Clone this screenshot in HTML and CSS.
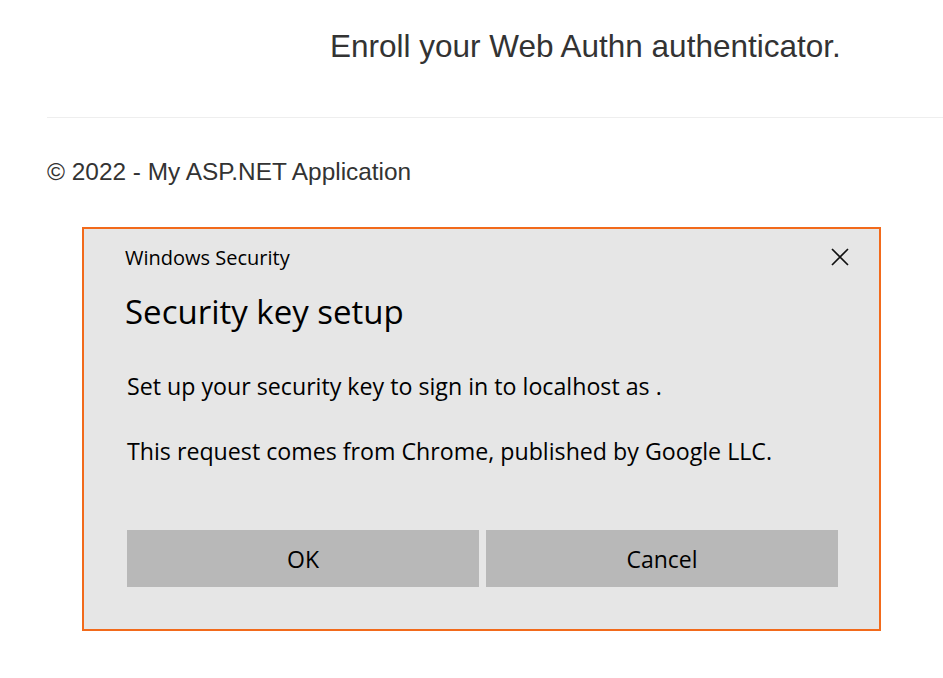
FILE: index.html
```html
<!DOCTYPE html>
<html>
<head>
<meta charset="utf-8">
<link rel="stylesheet" href="styles.css">
</head>
<body>
<div class="page">
  <h2 class="title">Enroll your Web Authn authenticator.</h2>
  <hr class="rule">
  <footer class="footer">© 2022 - My ASP.NET Application</footer>
  <div class="dialog">
    <div class="dlg-top">
      <span class="dlg-app">Windows Security</span>
      <svg class="dlg-close" width="18" height="18" viewBox="0 0 18 18"><path d="M1 1L17 17M17 1L1 17" stroke="#111" stroke-width="1.7" fill="none"/></svg>
    </div>
    <div class="dlg-heading">Security key setup</div>
    <p class="dlg-text">Set up your security key to sign in to localhost as .</p>
    <p class="dlg-text dlg-text2">This request comes from Chrome, published by Google LLC.</p>
    <div class="dlg-buttons">
      <button class="dlg-btn">OK</button>
      <button class="dlg-btn">Cancel</button>
    </div>
  </div>
</div>
</body>
</html>
```
FILE: styles.css
```css
html, body { margin: 0; padding: 0; background: #fff; }
.page { width: 943px; height: 678px; overflow: hidden; font-family: "Liberation Sans", Arial, sans-serif; color: #333; }
.title { margin: 0; padding: 28px 0 0 330px; font-size: 31.5px; font-weight: normal; line-height: 36px; color: #333; }
.rule { margin: 53px 0 0 47px; border: 0; border-top: 1px solid #eee; height: 0; }
.footer { margin: 39px 0 0 47px; font-size: 24.4px; line-height: 30px; }
.dialog { margin: 40px 0 0 82px; width: 795px; height: 400px; border: 2px solid #f26a1b; background: #e6e6e6; box-sizing: content-box; font-family: "Open Sans", "Noto Sans", sans-serif; color: #000; }
.dlg-top { display: flex; justify-content: space-between; align-items: center; padding: 13px 30px 0 41px; height: 30px; }
.dlg-app { font-size: 20px; }
.dlg-close { display: block; }
.dlg-heading { padding: 18px 0 0 41px; font-size: 33px; line-height: 44px; }
.dlg-text { margin: 0; padding: 36px 0 0 43px; font-size: 23.2px; line-height: 32px; }
.dlg-text2 { padding-top: 33px; }
.dlg-buttons { display: flex; gap: 7px; padding: 63px 0 0 43px; }
.dlg-btn { width: 352px; height: 57px; border: 0; background: #b8b8b8; font-family: "Open Sans", "Noto Sans", sans-serif; font-size: 23px; color: #000; padding: 0; }
```
